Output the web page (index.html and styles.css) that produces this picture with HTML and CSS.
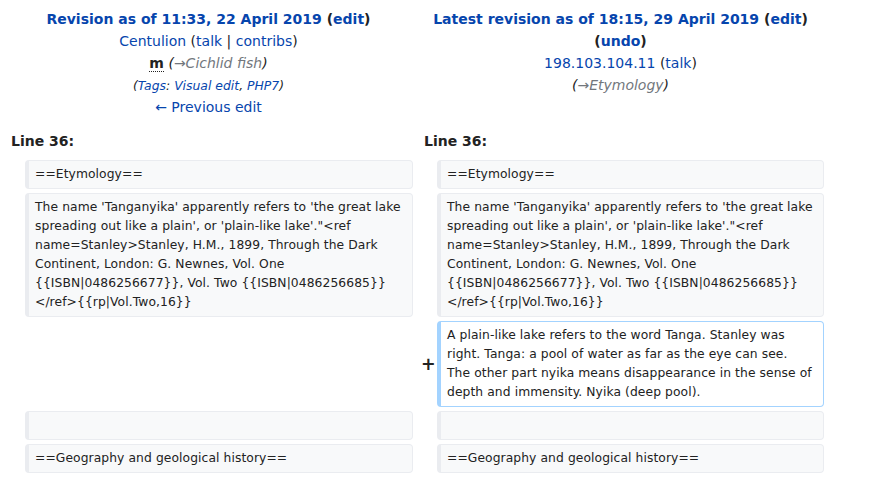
FILE: index.html
```html
<!DOCTYPE html>
<html lang="en">
<head>
<meta charset="utf-8">
<title>Lake Tanganyika: Difference between revisions</title>
<link rel="stylesheet" href="styles.css">
</head>
<body>
<div class="diff">
  <div class="title title-old">
    <div class="t-line strong"><a href="#">Revision as of 11:33, 22 April 2019</a> <span class="paren">(<a href="#">edit</a>)</span></div>
    <div class="t-line"><a href="#">Centulion</a> <span class="paren">(<a href="#">talk</a> | <a href="#">contribs</a>)</span></div>
    <div class="t-line"><abbr class="minor" title="This is a minor edit">m</abbr> <span class="comment">(<span class="autocomment">→Cichlid fish</span>)</span></div>
    <div class="t-line"><span class="tags">(<a href="#">Tags</a>: <a href="#">Visual edit</a>, <a href="#">PHP7</a>)</span></div>
    <div class="t-line"><a href="#">← Previous edit</a></div>
  </div>
  <div class="title title-new">
    <div class="t-line strong"><a href="#">Latest revision as of 18:15, 29 April 2019</a> <span class="paren">(<a href="#">edit</a>)</span></div>
    <div class="t-line strong"><span class="paren">(<a href="#">undo</a>)</span></div>
    <div class="t-line"><a href="#">198.103.104.11</a> <span class="paren">(<a href="#">talk</a>)</span></div>
    <div class="t-line"><span class="comment">(<span class="autocomment">→Etymology</span>)</span></div>
  </div>

  <div class="lineno lineno-old">Line 36:</div>
  <div class="lineno lineno-new">Line 36:</div>

  <div class="marker"></div>
  <div class="cell context">==Etymology==</div>
  <div class="marker"></div>
  <div class="cell context">==Etymology==</div>

  <div class="marker"></div>
  <div class="cell context">The name 'Tanganyika' apparently refers to 'the great lake spreading out like a plain', or 'plain-like lake'."&lt;ref name=Stanley&gt;Stanley, H.M., 1899, Through the Dark Continent, London: G. Newnes, Vol. One {{ISBN|0486256677}}, Vol. Two {{ISBN|0486256685}}&lt;/ref&gt;{{rp|Vol.Two,16}}</div>
  <div class="marker"></div>
  <div class="cell context">The name 'Tanganyika' apparently refers to 'the great lake spreading out like a plain', or 'plain-like lake'."&lt;ref name=Stanley&gt;Stanley, H.M., 1899, Through the Dark Continent, London: G. Newnes, Vol. One {{ISBN|0486256677}}, Vol. Two {{ISBN|0486256685}}&lt;/ref&gt;{{rp|Vol.Two,16}}</div>

  <div class="empty"></div>
  <div class="marker marker-add">+</div>
  <div class="cell added">A plain-like lake refers to the word Tanga. Stanley was
right. Tanga: a pool of water as far as the eye can see.
The other part nyika means disappearance in the sense of
depth and immensity. Nyika (deep pool).</div>

  <div class="marker"></div>
  <div class="cell context"><br></div>
  <div class="marker"></div>
  <div class="cell context"><br></div>

  <div class="marker"></div>
  <div class="cell context">==Geography and geological history==</div>
  <div class="marker"></div>
  <div class="cell context">==Geography and geological history==</div>
</div>
</body>
</html>
```

FILE: styles.css
```css
html, body {
  margin: 0;
  padding: 0;
  background: #ffffff;
}

body {
  font-family: "DejaVu Sans", sans-serif;
  font-size: 14px;
  line-height: 1.6;
  color: #222222;
}

a {
  color: #0645ad;
  text-decoration: none;
}

.diff {
  display: grid;
  grid-template-columns: 17px 388px 16px 387px;
  gap: 4px;
  padding: 4px;
  width: 828px;
  box-sizing: border-box;
}

.title {
  grid-column: span 2;
  text-align: center;
  padding: 4px 7px 0;
}

.t-line {
  height: 22px;
}

.t-line.strong {
  font-weight: bold;
}

.paren {
  color: #222222;
}

.minor {
  font-weight: bold;
  text-decoration: none;
  border-bottom: 1px dotted #222222;
  cursor: help;
}

.comment {
  font-style: italic;
  color: #222222;
}

.autocomment {
  color: #72777d;
}

.tags {
  font-style: italic;
  font-size: 12.4px;
  line-height: 1;
}

.lineno {
  grid-column: span 2;
  font-weight: bold;
  line-height: 22px;
  padding: 8px 7px 4px;
}

.marker {
  display: flex;
  align-items: center;
  padding: 0 4px;
  font-weight: bold;
  font-size: 17.5px;
  line-height: 1.2;
  white-space: nowrap;
}

.empty {
  grid-column: span 2;
}

.cell {
  font-size: 12.32px;
  line-height: 19px;
  letter-spacing: 0.08px;
  padding: 4px 6px;
  white-space: pre-wrap;
  word-wrap: break-word;
  border-style: solid;
  border-width: 1px 1px 1px 4px;
  border-radius: 4px;
  min-width: 0;
}

.context {
  background: #f8f9fa;
  border-color: #eaecf0;
  color: #222222;
}

.added {
  background: #ffffff;
  border-color: #a3d3ff;
  white-space: pre;
}
```
